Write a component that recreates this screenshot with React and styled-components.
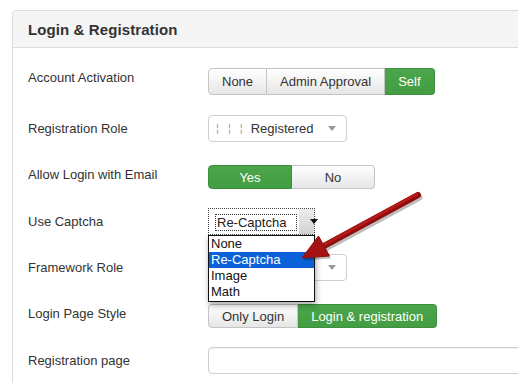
import styled, { createGlobalStyle } from 'styled-components';

const Global = createGlobalStyle`
  html, body {
    margin: 0;
    padding: 0;
    background: #fff;
    overflow: hidden;
  }
  body {
    font-family: "Liberation Sans", Arial, Helvetica, sans-serif;
    color: #333;
  }
`;

const Page = styled.div`
  position: relative;
  width: 518px;
  height: 383px;
  overflow: hidden;
  padding: 10px 0 0 12px;
  box-sizing: border-box;
`;

const Panel = styled.div`
  width: 620px;
  height: 420px;
  border: 1px solid #dcdcdc;
  border-radius: 4px;
  background: #fff;
`;

const Header = styled.div`
  height: 36px;
  background: #f5f5f5;
  border-bottom: 1px solid #dcdcdc;
  border-radius: 4px 4px 0 0;
  display: flex;
  align-items: center;
  padding-left: 15px;
`;

const Title = styled.h3`
  margin: 0;
  font-size: 15px;
  font-weight: bold;
  color: #333;
  letter-spacing: 0.1px;
`;

const Body = styled.div`
  padding-top: 10px;
`;

const Row = styled.div`
  height: ${p => p.$h}px;
  display: flex;
  align-items: center;
  padding-left: 15px;
`;

const Label = styled.div`
  width: 180px;
  flex-shrink: 0;
  font-size: 13px;
  color: #333;
  margin-top: ${p => p.$shift || 0}px;
`;

const Group = styled.div`
  display: flex;
`;

const Btn = styled.div`
  height: ${p => p.$h || 27}px;
  box-sizing: border-box;
  ${p => (p.$w ? `width: ${p.$w}px;` : 'padding: 0 13px;')}
  display: flex;
  align-items: center;
  justify-content: center;
  font-size: 13px;
  color: ${p => (p.$on ? '#fff' : '#333')};
  background: ${p =>
    p.$on ? 'linear-gradient(#4ba54b, #439d43)' : 'linear-gradient(#ffffff, #e6e6e6)'};
  border: 1px solid ${p => (p.$on ? '#3e8f3e' : '#c4c4c4')};
  border-left-width: ${p => (p.$first ? 1 : 0)}px;
  &:first-child {
    border-radius: 4px 0 0 4px;
  }
  &:last-child {
    border-radius: 0 4px 4px 0;
  }
`;

const Select = styled.div`
  width: 139px;
  height: 27px;
  box-sizing: border-box;
  border: 1px solid #cfcfcf;
  border-radius: 4px;
  background: #fff;
  display: flex;
  align-items: center;
  padding-left: 7px;
  font-size: 13px;
  color: #333;
`;

const Marks = styled.span`
  color: #999;
  font-size: 11px;
  letter-spacing: 0;
  word-spacing: 6px;
  margin-right: 8px;
`;

const Caret = styled.span`
  width: 0;
  height: 0;
  border-left: 4px solid transparent;
  border-right: 4px solid transparent;
  border-top: 5px solid ${p => p.$c || '#999'};
  margin-left: ${p => p.$ml || 14}px;
`;

const CaptchaWrap = styled.div`
  position: relative;
  width: 107px;
`;

const NativeSelect = styled.div`
  width: 107px;
  height: 27px;
  box-sizing: border-box;
  border: 1px dotted #444;
  background: #fff;
  display: flex;
  align-items: stretch;
`;

const NativeText = styled.div`
  flex: 1;
  margin: 5px 2px 3px 6px;
  border: 1px dotted #333;
  display: flex;
  align-items: center;
  padding-left: 1px;
  font-size: 13px;
  color: #222;
`;

const NativeArrow = styled.div`
  width: 15px;
  background: linear-gradient(#ececec, #d2d2d2);
  display: flex;
  align-items: center;
  justify-content: center;
`;

const List = styled.ul`
  position: absolute;
  left: 0;
  top: 27px;
  width: 107px;
  margin: 0;
  padding: 0 0 1px;
  list-style: none;
  box-sizing: border-box;
  border: 1px solid #111;
  background: #fff;
  box-shadow: 1px 3px 6px rgba(0, 0, 0, 0.35);
  z-index: 2;
`;

const Item = styled.li`
  height: 16px;
  line-height: 16px;
  padding-left: 2px;
  font-size: 13px;
  color: ${p => (p.$sel ? '#fff' : '#111')};
  background: ${p => (p.$sel ? '#0b62d8' : 'transparent')};
`;

const Input = styled.div`
  flex: 1;
  height: 27px;
  box-sizing: border-box;
  border: 1px solid #cfcfcf;
  border-radius: 4px;
  box-shadow: inset 0 1px 1px rgba(0, 0, 0, 0.06);
`;

const Overlay = styled.svg`
  position: absolute;
  left: 0;
  top: 0;
  pointer-events: none;
  z-index: 3;
`;

const RedArrow = () => (
  <Overlay width="518" height="383" viewBox="0 0 518 383">
    <g opacity="0.25" transform="translate(1.5 2.5)">
      <line x1="418" y1="195" x2="322" y2="247" stroke="#000" strokeWidth="6" strokeLinecap="round" />
      <polygon points="302,258 318.5,236 329.5,256" fill="#000" />
    </g>
    <line x1="418" y1="195" x2="322" y2="247" stroke="#8e0d0d" strokeWidth="6" strokeLinecap="round" />
    <line x1="417" y1="194" x2="322" y2="246" stroke="#b5191a" strokeWidth="3" strokeLinecap="round" />
    <polygon points="302,258 318.5,236 329.5,256" fill="#a51214" stroke="#8e0d0d" strokeWidth="1" strokeLinejoin="round" />
  </Overlay>
);

const RoleSelect = () => (
  <Select>
    <Marks>¦ ¦ ¦</Marks>
    Registered
    <Caret />
  </Select>
);

export default function App() {
  return (
    <Page>
      <Global />
      <Panel>
        <Header>
          <Title>Login &amp; Registration</Title>
        </Header>
        <Body>
          <Row $h={46}>
            <Label $shift={-8}>Account Activation</Label>
            <Group>
              <Btn $first>None</Btn>
              <Btn>Admin Approval</Btn>
              <Btn $on>Self</Btn>
            </Group>
          </Row>
          <Row $h={48}>
            <Label>Registration Role</Label>
            <RoleSelect />
          </Row>
          <Row $h={50}>
            <Label $shift={-6}>Allow Login with Email</Label>
            <Group>
              <Btn $first $on $w={84} $h={24}>Yes</Btn>
              <Btn $w={83} $h={24}>No</Btn>
            </Group>
          </Row>
          <Row $h={38}>
            <Label>Use Captcha</Label>
            <CaptchaWrap>
              <NativeSelect>
                <NativeText>Re-Captcha</NativeText>
                <NativeArrow>
                  <Caret $c="#111" $ml={0} />
                </NativeArrow>
              </NativeSelect>
              <List>
                <Item>None</Item>
                <Item $sel>Re-Captcha</Item>
                <Item>Image</Item>
                <Item>Math</Item>
              </List>
            </CaptchaWrap>
          </Row>
          <Row $h={54}>
            <Label>Framework Role</Label>
            <RoleSelect />
          </Row>
          <Row $h={44}>
            <Label $shift={-5}>Login Page Style</Label>
            <Group>
              <Btn $first $h={24}>Only Login</Btn>
              <Btn $on $h={24}>Login &amp; registration</Btn>
            </Group>
          </Row>
          <Row $h={44}>
            <Label>Registration page</Label>
            <Input />
          </Row>
        </Body>
      </Panel>
      <RedArrow />
    </Page>
  );
}
